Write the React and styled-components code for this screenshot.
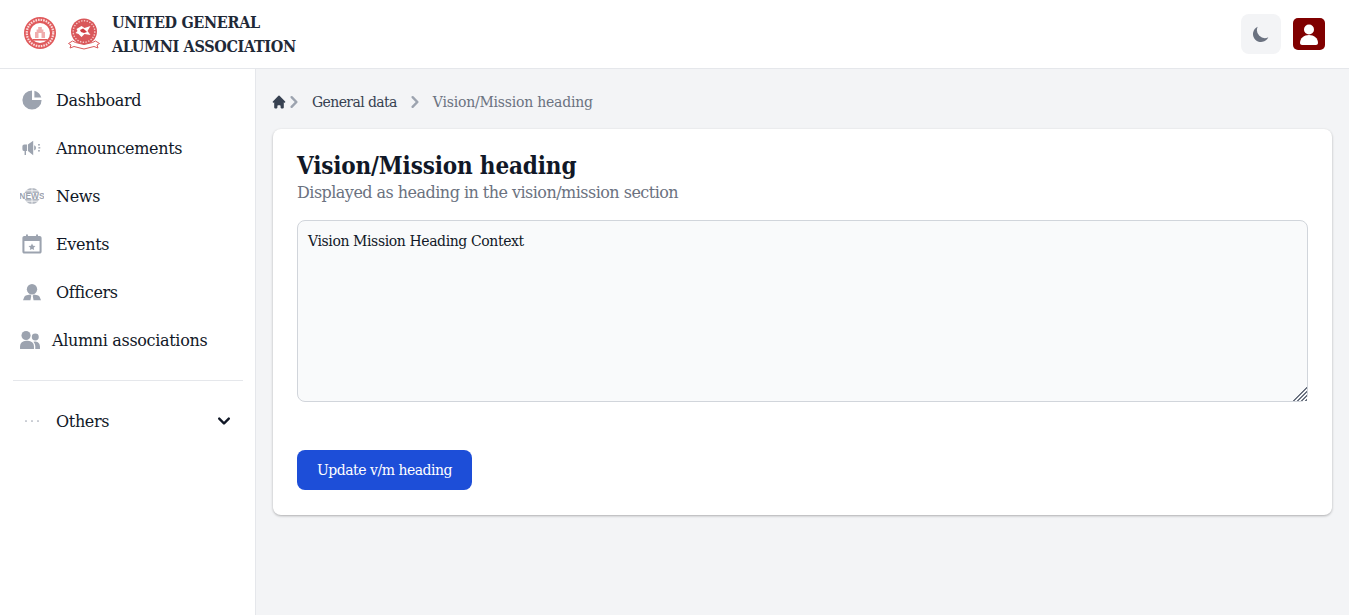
import styled, { createGlobalStyle } from "styled-components";

const serif = `"DejaVu Serif", "Liberation Serif", serif`;
const serifNarrow = `"DejaVu Serif Condensed", "DejaVu Serif", serif`;

const GlobalStyle = createGlobalStyle`
  html, body {
    margin: 0;
    height: 100%;
    overflow: hidden;
    background: #f3f4f6;
    font-family: ${serif};
  }
  * { box-sizing: border-box; }
`;

const Page = styled.div`
  width: 100%;
  height: 100vh;
  display: flex;
  flex-direction: column;
`;

const Topbar = styled.header`
  height: 69px;
  flex: none;
  background: #fff;
  border-bottom: 1px solid #e5e7eb;
  display: flex;
  align-items: center;
  justify-content: space-between;
  padding: 0 24px;
`;

const Brand = styled.div`
  display: flex;
  align-items: center;
  gap: 12px;
`;

const BrandName = styled.div`
  font-family: ${serifNarrow};
  font-size: 16px;
  line-height: 24px;
  font-weight: 700;
  color: #1f2937;
  letter-spacing: -0.32px;
  padding-top: 2px;
`;

const TopActions = styled.div`
  display: flex;
  align-items: center;
  gap: 12px;
`;

const ThemeButton = styled.button`
  width: 40px;
  height: 40px;
  border: 0;
  padding: 0;
  border-radius: 8px;
  background: #f3f4f6;
  display: flex;
  align-items: center;
  justify-content: center;
`;

const Avatar = styled.div`
  width: 32px;
  height: 32px;
  border-radius: 5px;
  background: #800000;
`;

const Body = styled.div`
  flex: 1;
  display: flex;
  min-height: 0;
`;

const Sidebar = styled.aside`
  width: 256px;
  flex: none;
  background: #fff;
  border-right: 1px solid #e5e7eb;
  padding: 7px 12px 0 12px;
`;

const NavItem = styled.div`
  height: 48px;
  display: flex;
  align-items: center;
  padding-left: ${(p) => (p.$tight ? "6px" : "8px")};
  gap: ${(p) => (p.$tight ? "10px" : "12px")};
  font-size: 16px;
  color: #111827;
  letter-spacing: -0.33px;
`;

const Divider = styled.hr`
  margin: 16px 0 16px 1px;
  width: 230px;
  border: 0;
  border-top: 1px solid #e5e7eb;
`;

const NavLabel = styled.span`
  flex: 1;
`;

const NavIcon = styled.svg`
  flex: none;
  fill: #9ca3af;
`;

const Caret = styled.svg`
  flex: none;
  fill: #111827;
  margin-right: 7px;
`;

const Main = styled.main`
  flex: 1;
  padding: 21px 17px 0 17px;
  min-width: 0;
`;

const Crumbs = styled.nav`
  height: 24px;
  margin-left: -2px;
  display: flex;
  align-items: center;
  font-size: 14px;
`;

const Crumb = styled.span`
  color: ${(p) => (p.$current ? "#6b7280" : "#374151")};
  letter-spacing: ${(p) => (p.$current ? "-0.22px" : "-0.6px")};
`;

const HomeIcon = styled.svg`
  flex: none;
  fill: #374151;
`;

const Chevron = styled.svg`
  flex: none;
  fill: #9ca3af;
  margin: 0 6px 0 ${(p) => (p.$first ? "-5px" : "6px")};
`;

const Card = styled.section`
  margin-top: 15px;
  height: 386px;
  background: #fff;
  border-radius: 8px;
  box-shadow: 0 1px 3px rgba(0, 0, 0, 0.2), 0 1px 2px rgba(0, 0, 0, 0.1);
  padding: 21px 24px 24px;
`;

const Title = styled.h1`
  margin: 0;
  font-family: ${serifNarrow};
  font-size: 24px;
  line-height: 32px;
  font-weight: 700;
  color: #111827;
  letter-spacing: -0.15px;
`;

const Subtitle = styled.p`
  margin: 0;
  font-size: 16px;
  line-height: 22px;
  color: #6b7280;
  letter-spacing: -0.53px;
`;

const Textarea = styled.textarea`
  display: block;
  width: 100%;
  height: 182px;
  margin-top: 16px;
  padding: 10px;
  background: #f9fafb;
  border: 1px solid #d1d5db;
  border-radius: 8px;
  font-family: ${serif};
  font-size: 14px;
  line-height: 20px;
  color: #111827;
  letter-spacing: -0.4px;
  outline: none;

  &::-webkit-resizer {
    background:
      linear-gradient(135deg, #f9fafb 50%, transparent 50%),
      repeating-linear-gradient(135deg, #6b7280 0 1.4px, #f9fafb 1.4px 2.8px);
  }
`;

const SubmitButton = styled.button`
  display: block;
  margin-top: 48px;
  width: 175px;
  height: 40px;
  border: 0;
  border-radius: 8px;
  background: #1d4ed8;
  color: #fff;
  font-family: ${serif};
  font-size: 14px;
  letter-spacing: -0.48px;
`;

const SealMark = styled.svg`
  flex: none;
  margin-top: ${(p) => (p.$lift ? "-2px" : "0")};
`;

// the two association seals, too small in the picture to need more than this
const CollegeSeal = () => (
  <SealMark $lift width="32" height="32" viewBox="0 0 32 32">
    <circle cx="16" cy="16" r="16" fill="#e05a5c" />
    <circle cx="16" cy="16" r="13.2" fill="none" stroke="#fbdcdc" strokeWidth="2.2" strokeDasharray="1.6 1" />
    <circle cx="16" cy="16" r="10" fill="#fff" />
    <path d="M11 21v-6h1.6v-2.5h1.6V10h3.6v2.5h1.6V15H21v6z" fill="#f0adad" />
    <path d="M8.5 22h15v1.6h-15z" fill="#e05a5c" />
    <path d="M14.5 16h3v5h-3z" fill="#fff" />
  </SealMark>
);

const AlumniSeal = () => (
  <SealMark width="32" height="32" viewBox="0 0 32 32">
    <circle cx="16" cy="13.5" r="13" fill="#d9575a" />
    <circle cx="16" cy="13.5" r="10.8" fill="none" stroke="#f6c6c6" strokeWidth="1.4" strokeDasharray="1.4 1.4" />
    <path d="M8.5 11l5-3 3 2 6-2-3 5 3 4-6-1-3 3-3-3-3-1 2-2z" fill="#fff" />
    <path d="M12 12l3-1.5 2 1.5 2 2-3 1-3-1z" fill="#cf3b40" />
    <path d="M0.5 25.5l4-2.5 3 1.5 8.5 2 8.5-2 3-1.5 4 2.5-2.5 1.5 1 3-4-1.5-10 2.5-10-2.5-4 1.5 1-3z" fill="#fff" stroke="#d9575a" strokeWidth="1" />
  </SealMark>
);

const Glyph = ({ children }) => (
  <NavIcon width="24" height="24" viewBox="0 0 20 20">
    {children}
  </NavIcon>
);

const navItems = [
  {
    label: "Dashboard",
    icon: (
      <Glyph>
        <path d="M2 10a8 8 0 018-8v8h8a8 8 0 11-16 0z" />
        <path d="M12 2.252A8.014 8.014 0 0117.748 8H12V2.252z" />
      </Glyph>
    ),
  },
  {
    label: "Announcements",
    icon: (
      <Glyph>
        <path d="M3.6 7h2.2v5.6H5v3.2H3.8v-3.2H3.6a1.6 1.6 0 01-1.6-1.6V8.6A1.6 1.6 0 013.6 7z" />
        <path d="M6.6 7l4.4-3v12l-4.4-3.4z" />
        <path d="M11.8 7.8a2.2 2.2 0 010 4.2z" />
        <rect x="15" y="6.8" width="1.6" height="1.1" />
        <rect x="15.3" y="9.3" width="1.6" height="1.1" />
        <rect x="15" y="11.8" width="1.6" height="1.1" />
      </Glyph>
    ),
  },
  {
    label: "News",
    icon: (
      <NavIcon width="24" height="24" viewBox="0 0 24 24">
        <circle cx="12" cy="12" r="8" fill="#b4b9c2" />
        <path d="M4 6.8h16M12 4v16M4 17.2h16" stroke="#fff" strokeWidth="0.8" />
        <path d="M0 9h24v6H0z" fill="#fff" />
        <text x="12" y="15" textAnchor="middle" fontFamily="Liberation Sans" fontWeight="700" fontSize="8.4" letterSpacing="0.1" fill="#9ca3af">
          NEWS
        </text>
      </NavIcon>
    ),
  },
  {
    label: "Events",
    icon: (
      <Glyph>
        <path fillRule="evenodd" d="M5 2h1.6v1.4h6.8V2H15v1.4h1.4c.9 0 1.6.7 1.6 1.6v11.4c0 .9-.7 1.6-1.6 1.6H3.6c-.9 0-1.6-.7-1.6-1.6V5c0-.9.7-1.6 1.6-1.6H5zM3.7 7.6v8.7h12.6V7.6z" />
        <path d="M10 9.6l.9 1.9 2 .2-1.5 1.4.4 2-1.8-1-1.8 1 .4-2-1.5-1.4 2-.2z" />
      </Glyph>
    ),
  },
  {
    label: "Officers",
    icon: (
      <Glyph>
        <circle cx="10" cy="7.7" r="4.3" />
        <path d="M2.5 16.8l1-2.4c.3-.9 1-1.4 2-1.7l3-.6.9 1-.7 3.7zM17.5 16.8l-1-2.4c-.3-.9-1-1.4-2-1.7l-3-.6-.9 1 .7 3.7z" />
      </Glyph>
    ),
  },
  {
    label: "Alumni associations",
    tight: true,
    icon: (
      <Glyph>
        <circle cx="6.7" cy="6.3" r="3.8" />
        <path d="M1.7 17.5v-2.3a5 4.6 0 015-4.6h1.6a5 4.6 0 015 4.6v2.3z" />
        <circle cx="14.4" cy="7.5" r="2.9" />
        <path d="M14.4 17.5v-2.6a6 6 0 00-1.5-3.4 4 4 0 015.4 3.7v2.3z" />
      </Glyph>
    ),
  },
];

const chevronPath =
  "M7.293 14.707a1 1 0 010-1.414L10.586 10 7.293 6.707a1 1 0 011.414-1.414l4 4a1 1 0 010 1.414l-4 4a1 1 0 01-1.414 0z";

export default function App() {
  return (
    <Page>
      <GlobalStyle />
      <Topbar>
        <Brand>
          <CollegeSeal />
          <AlumniSeal />
          <BrandName>
            UNITED GENERAL
            <br />
            ALUMNI ASSOCIATION
          </BrandName>
        </Brand>
        <TopActions>
          <ThemeButton aria-label="Toggle theme">
            <svg width="20" height="20" viewBox="0 0 20 20" fill="#6b7280">
              <path d="M17.293 13.293A8 8 0 016.707 2.707a8.001 8.001 0 1010.586 10.586z" />
            </svg>
          </ThemeButton>
          <Avatar>
            <svg width="32" height="32" viewBox="0 0 32 32" fill="#fff">
              <circle cx="16" cy="11.5" r="5" />
              <path d="M7 25c0-5 4-8 9-8s9 3 9 8c0 1-1 2-2 2H9c-1 0-2-1-2-2z" />
            </svg>
          </Avatar>
        </TopActions>
      </Topbar>
      <Body>
        <Sidebar>
          {navItems.map((item) => (
            <NavItem key={item.label} $tight={item.tight}>
              {item.icon}
              <NavLabel>{item.label}</NavLabel>
            </NavItem>
          ))}
          <Divider />
          <NavItem>
            <Glyph>
              <circle cx="5" cy="10" r="0.7" />
              <circle cx="10" cy="10" r="0.7" />
              <circle cx="15" cy="10" r="0.7" />
            </Glyph>
            <NavLabel>Others</NavLabel>
            <Caret width="24" height="24" viewBox="0 0 20 20">
              <path fillRule="evenodd" clipRule="evenodd" d="M5.293 7.293a1 1 0 011.414 0L10 10.586l3.293-3.293a1 1 0 111.414 1.414l-4 4a1 1 0 01-1.414 0l-4-4a1 1 0 010-1.414z" />
            </Caret>
          </NavItem>
        </Sidebar>
        <Main>
          <Crumbs>
            <HomeIcon width="16" height="16" viewBox="0 0 20 20">
              <path d="M10.7 2.3a1 1 0 00-1.4 0l-7 7a1 1 0 001.4 1.4l.3-.3V17a1 1 0 001 1h2a1 1 0 001-1v-2a1 1 0 011-1h2a1 1 0 011 1v2a1 1 0 001 1h2a1 1 0 001-1v-6.6l.3.3a1 1 0 001.4-1.4l-7-7z" />
            </HomeIcon>
            <Chevron $first width="24" height="24" viewBox="0 0 20 20">
              <path fillRule="evenodd" d={chevronPath} />
            </Chevron>
            <Crumb>General data</Crumb>
            <Chevron width="24" height="24" viewBox="0 0 20 20">
              <path fillRule="evenodd" d={chevronPath} />
            </Chevron>
            <Crumb $current>Vision/Mission heading</Crumb>
          </Crumbs>
          <Card>
            <Title>Vision/Mission heading</Title>
            <Subtitle>Displayed as heading in the vision/mission section</Subtitle>
            <Textarea defaultValue="Vision Mission Heading Context" />
            <SubmitButton>Update v/m heading</SubmitButton>
          </Card>
        </Main>
      </Body>
    </Page>
  );
}
